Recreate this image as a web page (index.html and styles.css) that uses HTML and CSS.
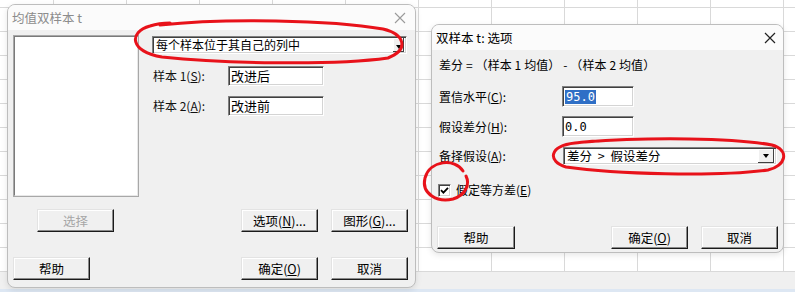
FILE: index.html
```html
<!DOCTYPE html>
<html lang="zh">
<head>
<meta charset="utf-8">
<title>均值双样本 t</title>
<link rel="stylesheet" href="styles.css">
</head>
<body>
<div class="sheet"></div>
<div class="tabs"></div>
<div class="status"></div>

<div class="win win-main inactive">
  <div class="title">
    <span class="title-text">均值双样本 t</span>
    <svg class="close" width="12" height="12" viewBox="0 0 12 12"><path d="M1 1L11 11M11 1L1 11" stroke="currentColor" stroke-width="1.1" fill="none"/></svg>
  </div>
  <div class="body body-main">
    <div class="top">
      <div class="listbox"></div>
      <div class="col">
        <div class="combo combo-main"><span class="combo-text">每个样本位于其自己的列中</span><span class="combo-btn"><i class="tri"></i></span></div>
        <div class="row row1"><span class="lbl lbl-main">样本 1(<u>S</u>):</span><span class="field field-main">改进后</span></div>
        <div class="row row2"><span class="lbl lbl-main">样本 2(<u>A</u>):</span><span class="field field-main">改进前</span></div>
      </div>
    </div>
    <div class="btnrow btnrow1">
      <button class="btn btn-sel" disabled>选择</button>
      <span class="grow"></span>
      <button class="btn">选项(<u>N</u>)...</button>
      <button class="btn">图形(<u>G</u>)...</button>
    </div>
    <div class="btnrow btnrow2">
      <button class="btn">帮助</button>
      <span class="grow"></span>
      <button class="btn">确定(<u>O</u>)</button>
      <button class="btn">取消</button>
    </div>
  </div>
</div>

<div class="win win-opt">
  <div class="title">
    <span class="title-text">双样本 t: 选项</span>
    <svg class="close" width="12" height="12" viewBox="0 0 12 12"><path d="M1 1L11 11M11 1L1 11" stroke="currentColor" stroke-width="1.2" fill="none"/></svg>
  </div>
  <div class="body body-opt">
    <div class="formula">差分 = （样本 1 均值） - （样本 2 均值）</div>
    <div class="orow orow1"><span class="lbl lbl-opt">置信水平(<u>C</u>):</span><span class="field field-opt"><span class="sel">95.0</span></span></div>
    <div class="orow orow2"><span class="lbl lbl-opt">假设差分(<u>H</u>):</span><span class="field field-opt">0.0</span></div>
    <div class="orow orow3"><span class="lbl lbl-opt">备择假设(<u>A</u>):</span><div class="combo combo-opt"><span class="combo-text">差分 &gt; 假设差分</span><span class="combo-btn"><i class="tri"></i></span></div></div>
    <div class="chkrow">
      <span class="chk"><svg width="9" height="9" viewBox="0 0 9 9"><path d="M1 4.2L3.4 6.6L8 1.8" stroke="#000" stroke-width="1.8" fill="none"/></svg></span>
      <span class="chk-lbl">假定等方差(<u>E</u>)</span>
    </div>
    <div class="btnrow btnrow3">
      <button class="btn btn-help2">帮助</button>
      <span class="grow"></span>
      <button class="btn">确定(<u>O</u>)</button>
      <button class="btn">取消</button>
    </div>
  </div>
</div>

<svg class="marks" width="795" height="292" viewBox="0 0 795 292">
  <path d="M160 25 C 225 18, 330 20, 383 29 C 404 34, 410 49, 388 58 C 330 66, 220 63, 162 57 C 130 52, 128 32, 150 26 C 156 24, 162 23, 170 23" />
  <path d="M585 142 C 650 137, 735 138, 772 145 C 790 150, 786 166, 768 170 C 715 177, 615 174, 566 167 C 547 161, 549 146, 575 143 C 585 142, 592 141, 600 141" />
  <path d="M463 171 C 455 158, 430 160, 425 178 C 421 194, 438 203, 453 199 C 466 195, 470 184, 466 176" />
</svg>
</body>
</html>
```

FILE: styles.css
```css
* { box-sizing: border-box; }
html, body { margin: 0; padding: 0; }
body {
  width: 795px;
  height: 292px;
  position: relative;
  overflow: hidden;
  background: #fff;
  font-family: "Noto Sans CJK SC", "Noto Sans", sans-serif;
  font-size: 12px;
  color: #000;
}
.sheet {
  height: 272px;
  background-color: #fff;
  background-image:
    linear-gradient(to right, #d9d9d9 1px, transparent 1px),
    linear-gradient(to bottom, #d9d9d9 1px, transparent 1px);
  background-size: 73px 24px;
  background-position: 53px 7px;
}
.tabs { height: 17px; background: #f0f0f0; }
.status { height: 3px; background: #dde7f3; }

.win {
  position: absolute;
  background: #f0f0f0;
  border: 1px solid #bdbdbd;
  border-radius: 8px;
  box-shadow: 0 2px 6px rgba(0,0,0,0.10);
  overflow: hidden;
  display: flex;
  flex-direction: column;
}
.win-main { left: 7px; top: 4px; width: 409px; height: 284px; }
.win-opt { left: 431px; top: 24px; width: 353px; height: 229px; }

.title {
  flex: none;
  height: 25px;
  background: #fbfbfb;
  display: flex;
  align-items: center;
  justify-content: space-between;
  padding: 0 9px 0 4px;
}
.title-text { font-size: 12.5px; line-height: 16px; }
.inactive .title-text { color: #8c8c8c; }
.inactive .close { color: #9a9a9a; }
.close { color: #222; }
.win-opt .close { margin-right: -2px; }

.body { flex: 1; display: flex; flex-direction: column; }
.body-main { padding: 5px 7px 0 5px; }
.top { display: flex; }
.listbox {
  width: 126px;
  height: 162px;
  background: #fff;
  border: 2px solid;
  border-color: #7a7a7a #e8e8e8 #e8e8e8 #7a7a7a;
  outline: 1px solid #a8a8a8;
  outline-offset: -1px;
}
.col { margin-left: 13px; width: 255px; display: flex; flex-direction: column; }

.combo {
  display: flex;
  align-items: center;
  background: #fff;
  border: 1px solid;
  border-color: #808080 #fff #fff #808080;
  box-shadow: inset 1px 1px 0 #404040, inset -1px -1px 0 #d4d4d4;
  padding: 2px;
}
.combo-main { margin-top: 1px; height: 18px; }
.combo-text { flex: 1; line-height: 14px; padding-left: 1px; white-space: nowrap; }
.combo-btn {
  width: 16px;
  height: 14px;
  background: #f0f0f0;
  display: flex;
  align-items: center;
  justify-content: center;
  box-shadow: inset -1px -1px 0 #404040, inset 1px 1px 0 #fff;
}
.combo-main .combo-btn {
  width: 11px;
  align-items: flex-end;
  padding-bottom: 3px;
}
.tri {
  width: 0; height: 0;
  border-left: 3.5px solid transparent;
  border-right: 3.5px solid transparent;
  border-top: 4px solid #000;
}

.row { display: flex; align-items: center; height: 20px; }
.row1 { margin-top: 12px; }
.row2 { margin-top: 10px; }
.lbl { white-space: nowrap; line-height: 16px; }
.lbl-main { width: 76px; padding-left: 1px; color: #111; }
.field {
  background: #fff;
  border: 1px solid;
  border-color: #808080 #fff #fff #808080;
  box-shadow: inset 1px 1px 0 #404040, inset -1px -1px 0 #d4d4d4;
  display: flex;
  align-items: center;
  padding-left: 2px;
  line-height: 14px;
  white-space: nowrap;
}
.field-main { width: 96px; height: 20px; font-size: 13px; }

.btnrow { display: flex; align-items: center; gap: 13px; }
.btnrow1 { margin-top: 12px; }
.btnrow2 { margin-top: 25px; }
.grow { flex: 1; }
.btn {
  width: 77px;
  height: 23px;
  padding: 0;
  margin: 0;
  font-family: inherit;
  font-size: 12.5px;
  line-height: 16px;
  color: #000;
  background: #f0f0f0;
  border: 1px solid;
  border-color: #e3e3e3 #1a1a1a #1a1a1a #e3e3e3;
  box-shadow: inset -1px -1px 0 #8a8a8a, inset 1px 1px 0 #fff;
}
.btn-sel { margin-left: 24px; color: #a6a6a6; }

.body-opt { padding: 0 5px; }
.formula { margin-top: 7px; padding-left: 2px; line-height: 16px; white-space: nowrap; letter-spacing: 0.1px; }
.orow { display: flex; align-items: center; }
.lbl-opt { width: 125px; padding-left: 2px; }
.field-opt { width: 72px; height: 21px; font-family: "DejaVu Sans Mono", monospace; font-size: 12px; }
.orow1 { margin-top: 13px; }
.orow2 { margin-top: 9px; }
.orow3 { margin-top: 10px; }
.sel { background: #2f6fc6; color: #fff; padding: 0 1px; }
.combo-opt { width: 214px; height: 18px; margin-left: 1px; }
.combo-opt .combo-text { font-size: 12.5px; word-spacing: 3px; }

.chkrow { display: flex; align-items: center; margin-top: 17px; padding-left: 1px; }
.chk {
  width: 13px;
  height: 13px;
  background: #fff;
  border: 1px solid;
  border-color: #808080 #fff #fff #808080;
  box-shadow: inset 1px 1px 0 #404040, inset -1px -1px 0 #d4d4d4;
  display: flex;
  align-items: center;
  justify-content: center;
}
.chk-lbl { margin-left: 5px; line-height: 16px; }
.btnrow3 { margin-top: 28px; }
.btn-help2 { width: 78px; }

.marks {
  position: absolute;
  left: 0;
  top: 0;
  pointer-events: none;
}
.marks path {
  fill: none;
  stroke: #e8121a;
  stroke-width: 3;
  stroke-linecap: round;
}
```
